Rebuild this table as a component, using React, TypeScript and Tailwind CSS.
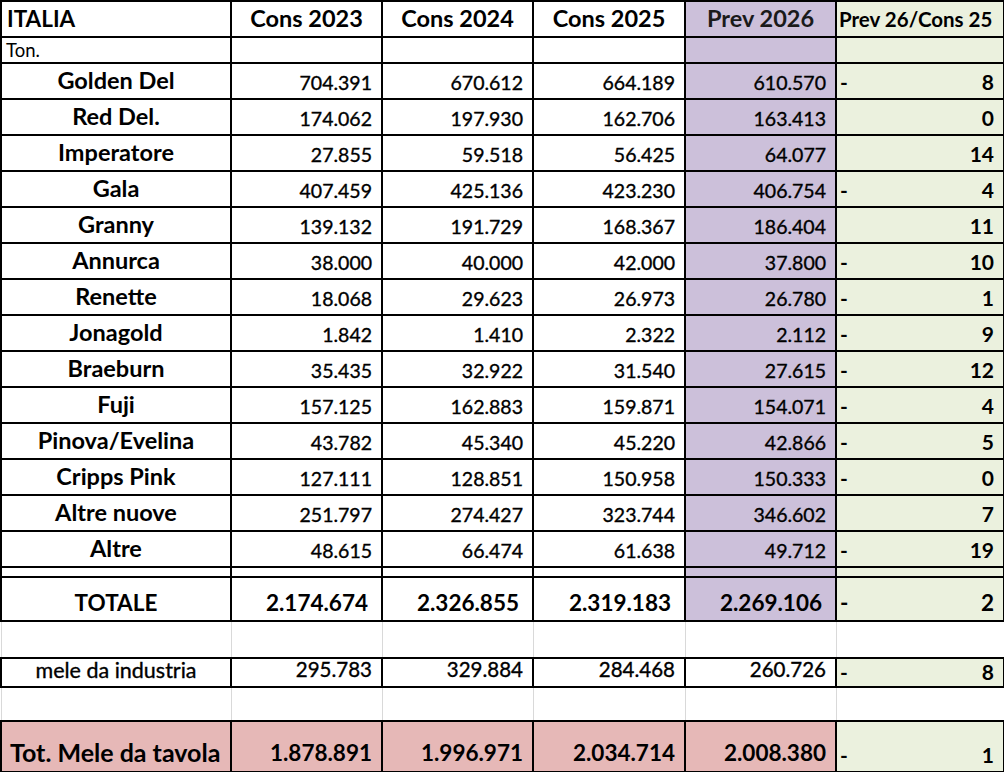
import React from 'react';

type Row = [string, string, string, string, string, boolean, string];

const rows: Row[] = [
  ['Golden Del', '704.391', '670.612', '664.189', '610.570', true, '8'],
  ['Red Del.', '174.062', '197.930', '162.706', '163.413', false, '0'],
  ['Imperatore', '27.855', '59.518', '56.425', '64.077', false, '14'],
  ['Gala', '407.459', '425.136', '423.230', '406.754', true, '4'],
  ['Granny', '139.132', '191.729', '168.367', '186.404', false, '11'],
  ['Annurca', '38.000', '40.000', '42.000', '37.800', true, '10'],
  ['Renette', '18.068', '29.623', '26.973', '26.780', true, '1'],
  ['Jonagold', '1.842', '1.410', '2.322', '2.112', true, '9'],
  ['Braeburn', '35.435', '32.922', '31.540', '27.615', true, '12'],
  ['Fuji', '157.125', '162.883', '159.871', '154.071', true, '4'],
  ['Pinova/Evelina', '43.782', '45.340', '45.220', '42.866', true, '5'],
  ['Cripps Pink', '127.111', '128.851', '150.958', '150.333', true, '0'],
  ['Altre nuove', '251.797', '274.427', '323.744', '346.602', false, '7'],
  ['Altre', '48.615', '66.474', '61.638', '49.712', true, '19'],
];

const cell = 'border-2 border-black p-0';
// regular figures look a touch heavier in the sheet
const num = 'text-right pr-[9px] align-bottom pb-[6px] text-[19.5px] leading-none [-webkit-text-stroke:0.35px_black]';
const purple = 'bg-[#ccc0da]';
const green = 'bg-[#ebf1de]';
const pink = 'bg-[#e6b8b7]';

const Diff = ({ minus, value }: { minus: boolean; value: string }) => (
  <div className="flex justify-between items-end pl-[3px] pr-[9px] font-bold">
    <span>{minus ? '-' : ''}</span>
    <span>{value}</span>
  </div>
);

const Blank = ({ h }: { h: string }) => (
  <tr className={h}>
    <td className="border-x border-[#d9d9d9] p-0"></td>
    <td className="border-x border-[#d9d9d9] p-0"></td>
    <td className="border-x border-[#d9d9d9] p-0"></td>
    <td className="border-x border-[#d9d9d9] p-0"></td>
    <td className="border-x border-[#d9d9d9] p-0"></td>
    <td className="border-x border-[#d9d9d9] p-0"></td>
  </tr>
);

export default function App() {
  return (
    <div className="w-[1004px] h-[772px] bg-white overflow-hidden font-[Lato,sans-serif] text-black">
      <table className="table-fixed border-collapse w-[1003px]">
        <colgroup>
          <col className="w-[230px]" />
          <col className="w-[151px]" />
          <col className="w-[151px]" />
          <col className="w-[152px]" />
          <col className="w-[151px]" />
          <col className="w-[168px]" />
        </colgroup>
        <tbody>
          <tr className="h-[36px]">
            <td className={`${cell} pl-[5px] text-[22.5px] font-bold leading-none`}>ITALIA</td>
            <td className={`${cell} text-center text-[23.5px] font-bold leading-none`}>Cons 2023</td>
            <td className={`${cell} text-center text-[23.5px] font-bold leading-none`}>Cons 2024</td>
            <td className={`${cell} text-center text-[23.5px] font-bold leading-none`}>Cons 2025</td>
            <td className={`${cell} ${purple} text-center text-[23.5px] font-bold leading-none text-[#1a1a1a]`}>Prev 2026</td>
            <td className={`${cell} ${green} pl-[2px] text-[20.5px] font-bold leading-none whitespace-nowrap`}>Prev 26/Cons 25</td>
          </tr>
          <tr className="h-[26px]">
            <td className={`${cell} pl-[4px] text-[18.5px] align-bottom pb-[3px] leading-none`}>Ton.</td>
            <td className={cell}></td>
            <td className={cell}></td>
            <td className={cell}></td>
            <td className={`${cell} ${purple}`}></td>
            <td className={`${cell} ${green}`}></td>
          </tr>
          {rows.map(([label, a, b, c, d, minus, pct]) => (
            <tr key={label} className="h-[36px]">
              <td className={`${cell} text-center font-bold text-[23.5px] align-bottom pb-[6px] leading-none`}>{label}</td>
              <td className={`${cell} ${num}`}>{a}</td>
              <td className={`${cell} ${num}`}>{b}</td>
              <td className={`${cell} ${num}`}>{c}</td>
              <td className={`${cell} ${purple} ${num}`}>{d}</td>
              <td className={`${cell} ${green} align-bottom pb-[6px] text-[21px] leading-none`}>
                <Diff minus={minus} value={pct} />
              </td>
            </tr>
          ))}
          <tr className="h-[10px]">
            <td className={cell}></td>
            <td className={cell}></td>
            <td className={cell}></td>
            <td className={cell}></td>
            <td className={`${cell} ${purple}`}></td>
            <td className={`${cell} ${green}`}></td>
          </tr>
          <tr className="h-[44px]">
            <td className={`${cell} text-center font-bold text-[22.5px] align-bottom pb-[6px] leading-none`}>TOTALE</td>
            <td className={`${cell} ${num} font-bold text-[22.5px] pr-[13px] [-webkit-text-stroke:0]`}>2.174.674</td>
            <td className={`${cell} ${num} font-bold text-[22.5px] pr-[13px] [-webkit-text-stroke:0]`}>2.326.855</td>
            <td className={`${cell} ${num} font-bold text-[22.5px] pr-[13px] [-webkit-text-stroke:0]`}>2.319.183</td>
            <td className={`${cell} ${purple} ${num} font-bold text-[22.5px] pr-[13px] [-webkit-text-stroke:0]`}>2.269.106</td>
            <td className={`${cell} ${green} align-bottom pb-[6px] text-[22.5px] leading-none`}>
              <Diff minus value="2" />
            </td>
          </tr>
          <Blank h="h-[37px]" />
          <tr className="h-[28px]">
            <td className={`${cell} text-center text-[21.5px] align-bottom pb-[4px] leading-none [-webkit-text-stroke:0.35px_black]`}>mele da industria</td>
            <td className={`${cell} ${num} pr-[3px] pb-[4px] text-[20.5px]`}>295.783</td>
            <td className={`${cell} ${num} pr-[3px] pb-[4px] text-[20.5px]`}>329.884</td>
            <td className={`${cell} ${num} pr-[3px] pb-[4px] text-[20.5px]`}>284.468</td>
            <td className={`${cell} ${num} pr-[3px] pb-[4px] text-[20.5px]`}>260.726</td>
            <td className={`${cell} ${green} align-bottom pb-[4px] text-[21px] leading-none`}>
              <Diff minus value="8" />
            </td>
          </tr>
          <Blank h="h-[34px]" />
          <tr className="h-[51px]">
            <td className={`${cell} ${pink} pl-[8px] font-bold text-[25px] align-bottom pb-[6px] leading-none whitespace-nowrap`}>Tot. Mele da tavola</td>
            <td className={`${cell} ${pink} ${num} font-bold text-[22.5px] pr-[4px] [-webkit-text-stroke:0]`}>1.878.891</td>
            <td className={`${cell} ${pink} ${num} font-bold text-[22.5px] pr-[4px] [-webkit-text-stroke:0]`}>1.996.971</td>
            <td className={`${cell} ${pink} ${num} font-bold text-[22.5px] pr-[4px] [-webkit-text-stroke:0]`}>2.034.714</td>
            <td className={`${cell} ${pink} ${num} font-bold text-[22.5px] pr-[4px] [-webkit-text-stroke:0]`}>2.008.380</td>
            <td className={`${cell} ${green} align-bottom pb-[6px] text-[21px] leading-none`}>
              <Diff minus value="1" />
            </td>
          </tr>
        </tbody>
      </table>
    </div>
  );
}
